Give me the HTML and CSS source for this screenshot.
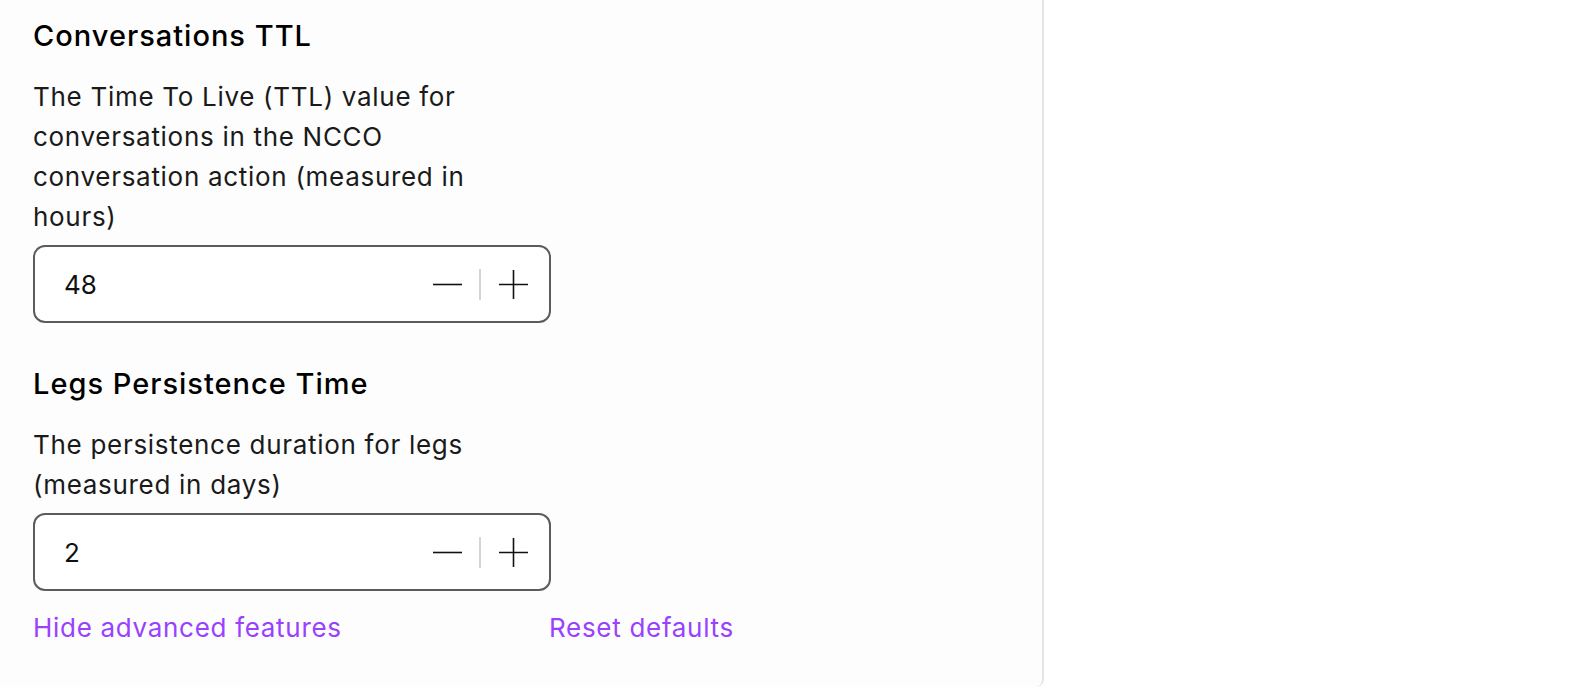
FILE: index.html
```html
<!DOCTYPE html>
<html>
	<head>
		<meta charset='utf-8' />
		<title>Advanced settings</title>
		<link rel="stylesheet" href="styles.css">
	</head>
	<body>

		<div class="panel">
			<div class="field">
				<h3 class="field-title">Conversations TTL</h3>
				<p class="field-desc">The Time To Live (TTL) value for conversations in the NCCO conversation action (measured in hours)</p>
				<div class="stepper">
					<input class="stepper-value" type="text" value="48" />
					<button class="stepper-btn" type="button" aria-label="decrease">
						<svg width="29" height="29" viewBox="0 0 29 29"><path d="M0 14.5h29" stroke="#111" stroke-width="1.6" /></svg>
					</button>
					<span class="stepper-sep"></span>
					<button class="stepper-btn" type="button" aria-label="increase">
						<svg width="29" height="29" viewBox="0 0 29 29"><path d="M0 14.5h29M14.5 0v29" stroke="#111" stroke-width="1.6" /></svg>
					</button>
				</div>
			</div>

			<div class="field">
				<h3 class="field-title">Legs Persistence Time</h3>
				<p class="field-desc">The persistence duration for legs (measured in days)</p>
				<div class="stepper">
					<input class="stepper-value" type="text" value="2" />
					<button class="stepper-btn" type="button" aria-label="decrease">
						<svg width="29" height="29" viewBox="0 0 29 29"><path d="M0 14.5h29" stroke="#111" stroke-width="1.6" /></svg>
					</button>
					<span class="stepper-sep"></span>
					<button class="stepper-btn" type="button" aria-label="increase">
						<svg width="29" height="29" viewBox="0 0 29 29"><path d="M0 14.5h29M14.5 0v29" stroke="#111" stroke-width="1.6" /></svg>
					</button>
				</div>
			</div>

			<div class="links">
				<a href="#">Hide advanced features</a>
				<a href="#">Reset defaults</a>
			</div>
		</div>

	</body>
</html>
```

FILE: styles.css
```css
body{
	margin:0;
	background-color:#fff;
	font: normal 26px Inter, "Noto Sans", sans-serif;
	letter-spacing:0.7px;
	color:#111;
}
.panel{
	width:1009px;
	height:669px;
	padding:18px 0 0 33px;
	background-color:#fdfdfd;
	border-right:2px solid #e3e3e3;
	border-bottom-right-radius:8px;
}
.field + .field{
	margin-top:43px;
}
.field-title{
	margin:0;
	font-size:29px;
	font-weight:500;
	letter-spacing:1px;
	line-height:36px;
	color:#000;
}
.field-desc{
	margin:23px 0 0 0;
	width:460px;
	line-height:40px;
	color:#1a1a1a;
}
.stepper{
	display:flex;
	align-items:center;
	margin-top:8px;
	padding:0 21px 0 0;
	box-sizing:border-box;
	width:518px;
	height:78px;
	border:2px solid #5c5c5c;
	border-radius:12px;
	background-color:#fff;
}
.stepper-value{
	flex:1;
	min-width:0;
	border:none;
	outline:none;
	background:none;
	padding:0 0 0 29px;
	font:inherit;
	color:#111;
}
.stepper-btn{
	display:flex;
	padding:0;
	border:none;
	background:none;
}
.stepper-sep{
	width:2px;
	height:31px;
	margin:0 18px 0 17px;
	background-color:#d4d4d4;
}
.links{
	display:grid;
	grid-template-columns:516px auto;
	margin-top:19px;
	line-height:36px;
}
.links a{
	color:#9941ff;
	text-decoration:none;
}
```
